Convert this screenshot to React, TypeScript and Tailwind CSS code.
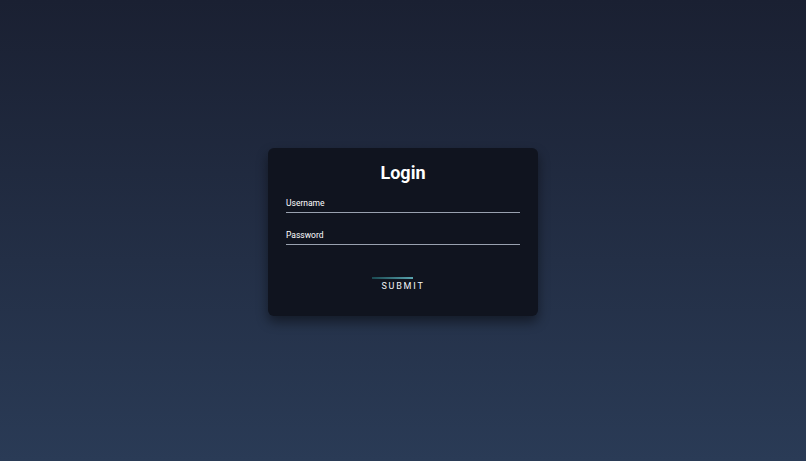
import React from 'react';

const Field = ({ label, type }: { label: string; type: string }) => (
  <label className="block">
    <span className="block text-[8.5px] leading-[9px] text-white">{label}</span>
    <input
      type={type}
      className="block w-full h-[5px] bg-transparent border-b border-gray-400 outline-none text-white"
    />
  </label>
);

const App = () => {
  return (
    <div
      className="w-full h-[461px] pt-[2px] flex items-center justify-center bg-gradient-to-b from-[#1a2032] to-[#2a3b56]"
      style={{ fontFamily: 'Roboto, "Liberation Sans", sans-serif' }}
    >
      <div className="w-[270px] h-[168px] rounded-md bg-[#10141f] shadow-[0_6px_12px_rgba(0,0,0,0.45)] px-[18px] pt-[13px]">
        <h1 className="text-center text-[18px] leading-[24px] font-bold text-white">Login</h1>
        <div className="mt-[14px] flex flex-col gap-[18px]">
          <Field label="Username" type="text" />
          <Field label="Password" type="password" />
        </div>
        <div className="mt-[35px] flex justify-center">
          <button className="relative text-[9px] leading-[12px] tracking-[0.2em] text-gray-100">
            <span className="absolute left-[-9px] top-[-3px] w-[41px] h-[2px] bg-gradient-to-r from-[#1b4a52] to-[#5aa5b0]" />
            SUBMIT
          </button>
        </div>
      </div>
    </div>
  );
};

export default App;
